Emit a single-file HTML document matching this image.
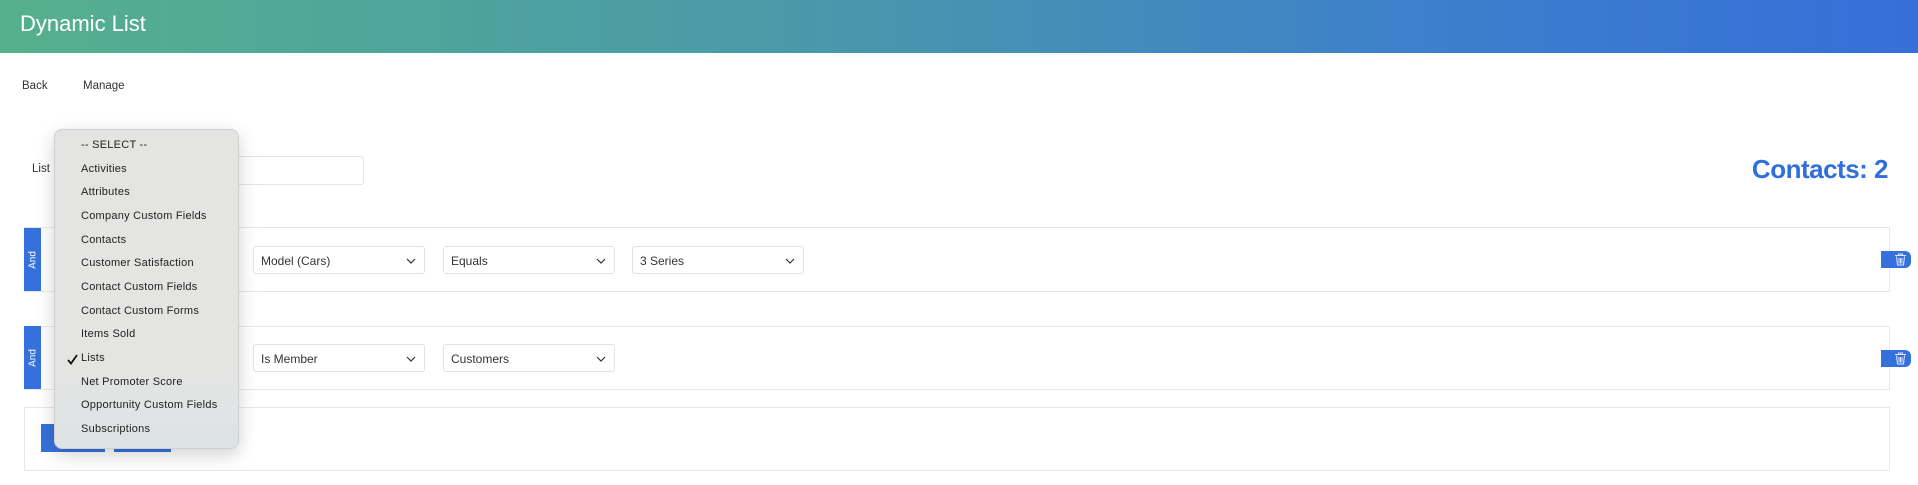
<!DOCTYPE html>
<html><head><meta charset="utf-8"><style>
*{box-sizing:border-box;margin:0;padding:0}
body{width:1918px;height:485px;overflow:hidden;background:#fff;font-family:"Liberation Sans",sans-serif;position:relative;color:#333}
.hdr{position:absolute;left:0;top:0;width:1918px;height:53px;background:linear-gradient(90deg,#55b08d 0%,#4a9aa8 40%,#3d7fcc 75%,#356fd9 100%)}
.hdr span{position:absolute;left:20px;top:11px;color:#fff;font-size:22px}
.a{position:absolute;font-size:11.5px;color:#333}
.inp{position:absolute;left:200px;top:156px;width:164px;height:29px;border:1px solid #e6e6e6;border-radius:3px}
.box{position:absolute;left:24px;width:1866px;border:1px solid #e8e8e8}
.and{position:absolute;left:24px;width:17px;background:#3571dc;color:#fff;font-size:10px}
.and span{position:absolute;left:50%;top:50%;transform:translate(-50%,-50%) rotate(-90deg)}
.sel{position:absolute;height:28px;width:172px;border:1px solid #e3e3e3;border-radius:3px;font-size:12px;color:#333;padding:7px 0 0 7px}
.sel svg{position:absolute;right:8px;top:11px}
.tr{position:absolute;left:1881px;width:30px;height:17px;background:#3571dc;border-radius:0 6px 6px 0}
.tr svg{position:absolute;left:13px;top:2px}
.btn{position:absolute;top:424px;height:28px;background:#3571dc}
.dd{position:absolute;left:54px;top:129px;width:185px;height:320px;background:linear-gradient(180deg,#e4e4e3 75%,#dde3e5 100%);border:1px solid #cfcfcf;border-radius:8px;box-shadow:0 6px 18px rgba(0,0,0,.18)}
.dd div{position:absolute;left:26px;font-size:11px;color:#222;letter-spacing:.25px}
.ct{position:absolute;right:30px;top:154px;font-size:26px;font-weight:bold;color:#2f6fdc;letter-spacing:-.5px}
</style></head><body>
<div class="hdr"><span>Dynamic List</span></div>
<div class="a" style="left:22px;top:80px">Back</div>
<div class="a" style="left:83px;top:80px">Manage</div>
<div class="a" style="left:32px;top:163px">List</div>
<div class="inp"></div>
<div class="ct">Contacts: 2</div>

<div class="box" style="top:227px;height:65px"></div>
<div class="and" style="top:228px;height:63px"><span>And</span></div>
<div class="sel" style="left:253px;top:246px">Model (Cars)<svg width="10" height="7" viewBox="0 0 10 7"><path d="M1 1l4 4 4-4" fill="none" stroke="#333" stroke-width="1.2"/></svg></div>
<div class="sel" style="left:443px;top:246px">Equals<svg width="10" height="7" viewBox="0 0 10 7"><path d="M1 1l4 4 4-4" fill="none" stroke="#333" stroke-width="1.2"/></svg></div>
<div class="sel" style="left:632px;top:246px">3 Series<svg width="10" height="7" viewBox="0 0 10 7"><path d="M1 1l4 4 4-4" fill="none" stroke="#333" stroke-width="1.2"/></svg></div>
<div class="tr" style="top:251px"><svg width="13" height="13" viewBox="0 0 13 13"><path d="M1 2.5h11M4.5 2.5V1h4v1.5M2.5 3.5l1 8.5h6l1-8.5M5 5v5.5M6.5 5v5.5M8 5v5.5" fill="none" stroke="#dfe8fb" stroke-width="1"/></svg></div>

<div class="box" style="top:326px;height:64px"></div>
<div class="and" style="top:326px;height:63px"><span>And</span></div>
<div class="sel" style="left:253px;top:344px">Is Member<svg width="10" height="7" viewBox="0 0 10 7"><path d="M1 1l4 4 4-4" fill="none" stroke="#333" stroke-width="1.2"/></svg></div>
<div class="sel" style="left:443px;top:344px">Customers<svg width="10" height="7" viewBox="0 0 10 7"><path d="M1 1l4 4 4-4" fill="none" stroke="#333" stroke-width="1.2"/></svg></div>
<div class="tr" style="top:350px"><svg width="13" height="13" viewBox="0 0 13 13"><path d="M1 2.5h11M4.5 2.5V1h4v1.5M2.5 3.5l1 8.5h6l1-8.5M5 5v5.5M6.5 5v5.5M8 5v5.5" fill="none" stroke="#dfe8fb" stroke-width="1"/></svg></div>

<div class="box" style="top:407px;height:64px"></div>
<div class="btn" style="left:41px;width:64px"></div>
<div class="btn" style="left:114px;width:57px"></div>

<div class="dd">
<div style="top:9px">-- SELECT --</div>
<div style="top:33px">Activities</div>
<div style="top:56px">Attributes</div>
<div style="top:80px">Company Custom Fields</div>
<div style="top:104px">Contacts</div>
<div style="top:127px">Customer Satisfaction</div>
<div style="top:151px">Contact Custom Fields</div>
<div style="top:175px">Contact Custom Forms</div>
<div style="top:198px">Items Sold</div>
<div style="top:222px">Lists</div>
<svg style="position:absolute;left:12px;top:224px" width="11" height="11" viewBox="0 0 11 11"><path d="M1 6l3 3.5L10 1" fill="none" stroke="#111" stroke-width="1.8"/></svg>
<div style="top:246px">Net Promoter Score</div>
<div style="top:269px">Opportunity Custom Fields</div>
<div style="top:293px">Subscriptions</div>
</div>
</body></html>
